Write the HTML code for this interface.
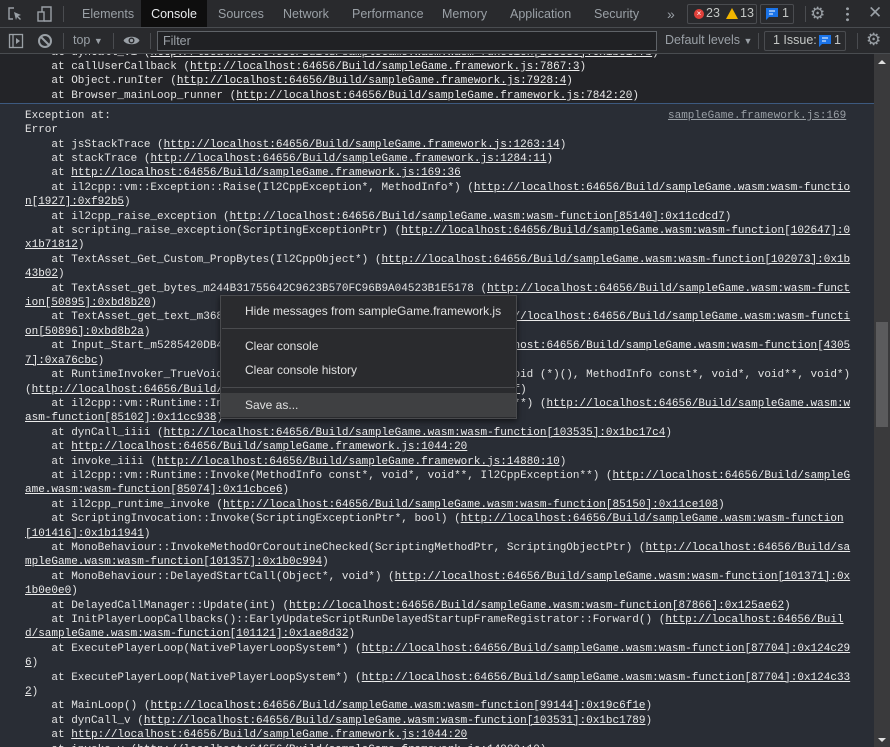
<!DOCTYPE html>
<html><head><meta charset="utf-8"><style>
*{margin:0;padding:0;box-sizing:border-box}
html,body{width:890px;height:747px;overflow:hidden;background:#292d35;font-family:"Liberation Sans",sans-serif}
.bar{position:absolute;left:0;width:890px;background:#292a2d;border-bottom:1px solid #494c50;color:#9aa0a6;font-size:12.5px}
.abs{position:absolute}
.sep{position:absolute;width:1px;background:#4a4c50}
.tab{position:absolute;top:0;height:27px;line-height:28px;color:#9aa0a6}
.mono{font-family:"Liberation Mono",monospace;font-size:11px;line-height:14.4px;color:#e3e3e3;white-space:pre-wrap;word-break:break-all}
u{text-decoration:underline;text-underline-offset:1px;color:#ececec}
.menu{position:absolute;left:220px;top:295px;width:297px;height:124px;background:#2a2b2e;border:1px solid #4a4b4e;box-shadow:0 2px 6px rgba(0,0,0,.6);font-size:12px;color:#e0e0e0}
.mi{position:absolute;left:24px}
</style></head><body>
<div class="bar" style="top:0;height:28px">
<svg class="abs" style="left:6px;top:5px" width="18" height="18" viewBox="0 0 18 18" fill="none" stroke="#9aa0a6" stroke-width="1.4"><path d="M8 3H3v11h4"/><path d="M8 7l7 3-3 1 3 3-1 1-3-3-1 3z" fill="#9aa0a6" stroke="none"/></svg>
<svg class="abs" style="left:36px;top:5px" width="18" height="18" viewBox="0 0 18 18" fill="none" stroke="#9aa0a6" stroke-width="1.4"><rect x="2" y="7" width="6" height="9"/><path d="M6 7V2h9v14H8"/></svg>
<div class="sep" style="left:63px;top:6px;height:16px"></div>
<div class="tab" style="left:82px">Elements</div>
<div class="tab" style="left:141px;width:66px;background:#0e0e0e;color:#e8eaed;text-align:center">Console</div>
<div class="tab" style="left:218px">Sources</div>
<div class="tab" style="left:283px">Network</div>
<div class="tab" style="left:352px">Performance</div>
<div class="tab" style="left:442px">Memory</div>
<div class="tab" style="left:510px">Application</div>
<div class="tab" style="left:594px">Security</div>
<div class="tab" style="left:667px;font-size:14px">»</div>
<div class="abs" style="left:687px;top:4px;width:70px;height:20px;border:1px solid #4a4c50;border-radius:2px"></div>
<div class="abs" style="left:694px;top:9px;width:10px;height:10px;border-radius:50%;background:#e0403a;color:#fff;font-size:8px;line-height:10px;text-align:center">×</div>
<div class="abs" style="left:706px;top:6px;color:#c4c7c5">23</div>
<svg class="abs" style="left:726px;top:8px" width="12" height="11"><path d="M6 0L12 11H0z" fill="#f2b600"/></svg>
<div class="abs" style="left:740px;top:6px;color:#c4c7c5">13</div>
<div class="abs" style="left:760px;top:4px;width:34px;height:20px;border:1px solid #4a4c50;border-radius:2px"></div>
<svg class="abs" style="left:766px;top:8px" width="12" height="12"><path d="M0 0h12v9H3l-3 3z" fill="#1a73e8"/><path d="M3 3h6M3 6h4" stroke="#fff" stroke-width="1"/></svg>
<div class="abs" style="left:782px;top:6px;color:#c4c7c5">1</div>
<div class="sep" style="left:805px;top:6px;height:16px"></div>
<div class="abs" style="left:810px;top:4px;color:#9aa0a6;font-size:17px">⚙</div>
<div class="abs" style="left:846px;top:6px;width:3px;height:16px;background:radial-gradient(circle,#9aa0a6 1.3px,transparent 1.6px) 0 0/3px 5.5px"></div>
<div class="abs" style="left:868px;top:3px;color:#9aa0a6;font-size:17px">✕</div>
</div>
<div class="bar" style="top:28px;height:26px">
<svg class="abs" style="left:8px;top:5px" width="16" height="16" fill="none" stroke="#9aa0a6" stroke-width="1.3"><rect x="1.5" y="1.5" width="13" height="13"/><path d="M5 2v12"/><path d="M8 5l4 3-4 3z" fill="#9aa0a6" stroke="none"/></svg>
<svg class="abs" style="left:37px;top:5px" width="16" height="16" fill="none" stroke="#9aa0a6" stroke-width="2"><circle cx="8" cy="8" r="6"/><path d="M4 4l8 8"/></svg>
<div class="sep" style="left:63px;top:5px;height:16px"></div>
<div class="abs" style="left:73px;top:5px">top <span style="font-size:9px">▼</span></div>
<div class="sep" style="left:113px;top:5px;height:16px"></div>
<svg class="abs" style="left:123px;top:6px" width="17" height="13"><path d="M0.5 6.5C3 1.5 14 1.5 16.5 6.5C14 11.5 3 11.5 0.5 6.5z" fill="#9aa0a6"/><circle cx="8.5" cy="6.5" r="3" fill="#292a2d"/><circle cx="8.5" cy="6.5" r="1.6" fill="#9aa0a6"/></svg>
<div class="sep" style="left:150px;top:5px;height:16px"></div>
<div class="abs" style="left:157px;top:3px;width:500px;height:20px;border:1px solid #5f6368;background:#202124;color:#9aa0a6;padding-left:5px;line-height:18px">Filter</div>
<div class="abs" style="left:665px;top:5px">Default levels <span style="font-size:9px">▼</span></div>
<div class="sep" style="left:758px;top:5px;height:16px"></div>
<div class="abs" style="left:764px;top:3px;width:82px;height:20px;border:1px solid #4a4c50;border-radius:2px"></div>
<div class="abs" style="left:773px;top:5px;color:#c4c7c5">1 Issue:</div>
<svg class="abs" style="left:819px;top:7px" width="12" height="12"><path d="M0 0h12v9H3l-3 3z" fill="#1a73e8"/><path d="M3 3h6M3 6h4" stroke="#fff" stroke-width="1"/></svg>
<div class="abs" style="left:834px;top:5px;color:#c4c7c5">1</div>
<div class="sep" style="left:857px;top:5px;height:16px"></div>
<div class="abs" style="left:866px;top:2px;color:#9aa0a6;font-size:17px">⚙</div>
</div>
<div class="abs" style="left:0;top:54px;width:874px;height:693px;overflow:hidden">
<div class="abs" style="left:0;top:0;width:874px;height:50px;background:#232428;border-bottom:1px solid #3d5a80"></div>
<div class="abs mono" style="left:25px;top:-8.4px;width:826px">    at dynCall_vi (<u>http://localhost:64656/Build/sampleGame.wasm:wasm-function[103530]:0x1bc177b</u>)
    at callUserCallback (<u>http://localhost:64656/Build/sampleGame.framework.js:7867:3</u>)
    at Object.runIter (<u>http://localhost:64656/Build/sampleGame.framework.js:7928:4</u>)
    at Browser_mainLoop_runner (<u>http://localhost:64656/Build/sampleGame.framework.js:7842:20</u>)</div>
<div class="abs mono" style="left:668px;top:54.8px;color:#9aa0a6"><u style="color:#9aa0a6">sampleGame.framework.js:169</u></div>
<div class="abs mono" style="left:25px;top:54.8px;width:826px">Exception at:
Error
    at jsStackTrace (<u>http://localhost:64656/Build/sampleGame.framework.js:1263:14</u>)
    at stackTrace (<u>http://localhost:64656/Build/sampleGame.framework.js:1284:11</u>)
    at <u>http://localhost:64656/Build/sampleGame.framework.js:169:36</u>
    at il2cpp::vm::Exception::Raise(Il2CppException*, MethodInfo*) (<u>http://localhost:64656/Build/sampleGame.wasm:wasm-function[1927]:0xf92b5</u>)
    at il2cpp_raise_exception (<u>http://localhost:64656/Build/sampleGame.wasm:wasm-function[85140]:0x11cdcd7</u>)
    at scripting_raise_exception(ScriptingExceptionPtr) (<u>http://localhost:64656/Build/sampleGame.wasm:wasm-function[102647]:0x1b71812</u>)
    at TextAsset_Get_Custom_PropBytes(Il2CppObject*) (<u>http://localhost:64656/Build/sampleGame.wasm:wasm-function[102073]:0x1b43b02</u>)
    at TextAsset_get_bytes_m244B31755642C9623B570FC96B9A04523B1E5178 (<u>http://localhost:64656/Build/sampleGame.wasm:wasm-function[50895]:0xbd8b20</u>)
    at TextAsset_get_text_m36846042E3CF3D9DD3B5B06D51E6F7E8A15F79D9 (<u>http://localhost:64656/Build/sampleGame.wasm:wasm-function[50896]:0xbd8b2a</u>)
    at Input_Start_m5285420DB4A4DA20C0A1C98C8E34E1D7C6F04B3A (<u>http://localhost:64656/Build/sampleGame.wasm:wasm-function[43057]:0xa76cbc</u>)
    at RuntimeInvoker_TrueVoid_t700C6383A2A510C2CF4DD86DABD5CA9FF70ADAC5(void (*)(), MethodInfo const*, void*, void**, void*) (<u>http://localhost:64656/Build/sampleGame.wasm:wasm-function[85063]:0x11c9bf</u>)
    at il2cpp::vm::Runtime::InvokeWithThrow(MethodInfo const*, void*, void**) (<u>http://localhost:64656/Build/sampleGame.wasm:wasm-function[85102]:0x11cc938</u>)
    at dynCall_iiii (<u>http://localhost:64656/Build/sampleGame.wasm:wasm-function[103535]:0x1bc17c4</u>)
    at <u>http://localhost:64656/Build/sampleGame.framework.js:1044:20</u>
    at invoke_iiii (<u>http://localhost:64656/Build/sampleGame.framework.js:14880:10</u>)
    at il2cpp::vm::Runtime::Invoke(MethodInfo const*, void*, void**, Il2CppException**) (<u>http://localhost:64656/Build/sampleGame.wasm:wasm-function[85074]:0x11cbce6</u>)
    at il2cpp_runtime_invoke (<u>http://localhost:64656/Build/sampleGame.wasm:wasm-function[85150]:0x11ce108</u>)
    at ScriptingInvocation::Invoke(ScriptingExceptionPtr*, bool) (<u>http://localhost:64656/Build/sampleGame.wasm:wasm-function[101416]:0x1b11941</u>)
    at MonoBehaviour::InvokeMethodOrCoroutineChecked(ScriptingMethodPtr, ScriptingObjectPtr) (<u>http://localhost:64656/Build/sampleGame.wasm:wasm-function[101357]:0x1b0c994</u>)
    at MonoBehaviour::DelayedStartCall(Object*, void*) (<u>http://localhost:64656/Build/sampleGame.wasm:wasm-function[101371]:0x1b0e0e0</u>)
    at DelayedCallManager::Update(int) (<u>http://localhost:64656/Build/sampleGame.wasm:wasm-function[87866]:0x125ae62</u>)
    at InitPlayerLoopCallbacks()::EarlyUpdateScriptRunDelayedStartupFrameRegistrator::Forward() (<u>http://localhost:64656/Build/sampleGame.wasm:wasm-function[101121]:0x1ae8d32</u>)
    at ExecutePlayerLoop(NativePlayerLoopSystem*) (<u>http://localhost:64656/Build/sampleGame.wasm:wasm-function[87704]:0x124c296</u>)
    at ExecutePlayerLoop(NativePlayerLoopSystem*) (<u>http://localhost:64656/Build/sampleGame.wasm:wasm-function[87704]:0x124c332</u>)
    at MainLoop() (<u>http://localhost:64656/Build/sampleGame.wasm:wasm-function[99144]:0x19c6f1e</u>)
    at dynCall_v (<u>http://localhost:64656/Build/sampleGame.wasm:wasm-function[103531]:0x1bc1789</u>)
    at <u>http://localhost:64656/Build/sampleGame.framework.js:1044:20</u>
    at invoke_v (<u>http://localhost:64656/Build/sampleGame.framework.js:14900:10</u>)</div>
</div>
<div class="abs" style="left:874px;top:54px;width:16px;height:693px;background:#3a3a3c"></div>
<div class="abs" style="left:876px;top:322px;width:12px;height:105px;background:#5b5b5d"></div>
<svg class="abs" style="left:878px;top:59px" width="8" height="6"><path d="M0 5L4 1L8 5z" fill="#e0e0e0"/></svg>
<svg class="abs" style="left:878px;top:737px" width="8" height="6"><path d="M0 1L4 5L8 1z" fill="#e0e0e0"/></svg>
<div class="menu">
<div class="mi" style="top:8px">Hide messages from sampleGame.framework.js</div>
<div class="abs" style="left:1px;right:1px;top:32px;height:1px;background:#4a4b4e"></div>
<div class="mi" style="top:43px">Clear console</div>
<div class="mi" style="top:67px">Clear console history</div>
<div class="abs" style="left:1px;right:1px;top:91px;height:1px;background:#4a4b4e"></div>
<div class="abs" style="left:0;right:0;top:97px;height:24px;background:#3f4042"></div>
<div class="mi" style="top:102px">Save as...</div>
</div>
</body></html>
